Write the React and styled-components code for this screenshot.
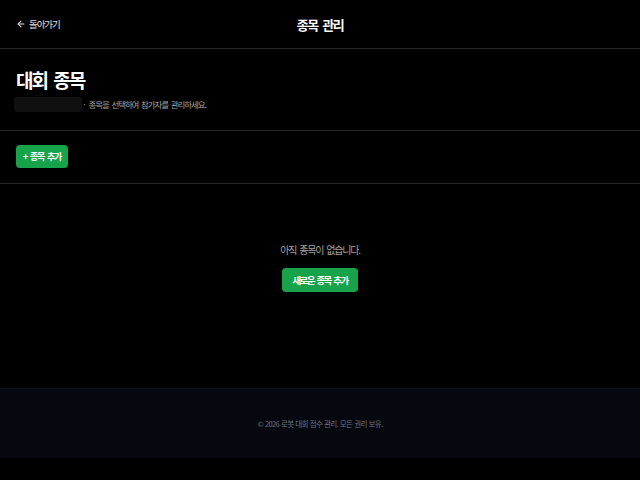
import React from 'react';
import styled, { createGlobalStyle } from 'styled-components';
import { ArrowLeft } from 'lucide-react';

const GlobalStyle = createGlobalStyle`
  html, body {
    margin: 0;
    padding: 0;
    background: #000;
  }
  body {
    font-family: "Noto Sans CJK KR", "Noto Sans", sans-serif;
    color: #fff;
  }
`;

const Page = styled.div`
  width: 640px;
  min-height: 480px;
  display: flex;
  flex-direction: column;
  background: #000;
`;

const Header = styled.header`
  height: 48px;
  display: grid;
  grid-template-columns: 1fr auto 1fr;
  align-items: center;
  padding: 0 16px;
  border-bottom: 1px solid #262626;
`;

const BackLink = styled.a`
  display: flex;
  align-items: center;
  gap: 3px;
  font-size: 9.5px;
  letter-spacing: -1.1px;
  color: #e5e5e5;
  text-decoration: none;
`;

const HeaderTitle = styled.h1`
  margin: 0;
  font-size: 13px;
  letter-spacing: -1.5px;
  word-spacing: 3px;
  font-weight: 700;
`;

const Intro = styled.section`
  padding: 16px 16px 18px;
  border-bottom: 1px solid #262626;
`;

const Title = styled.h2`
  margin: 0;
  font-size: 19px;
  line-height: 30px;
  letter-spacing: -2px;
  word-spacing: 4px;
  font-weight: 700;
`;

const Description = styled.p`
  margin: 2px 0 0;
  display: flex;
  align-items: center;
  font-size: 8.5px;
  line-height: 15px;
  letter-spacing: -1.1px;
  word-spacing: 2px;
  color: #a3a3a3;
`;

const Skeleton = styled.span`
  width: 68px;
  height: 15px;
  margin-left: -2px;
  border-radius: 3px;
  background: #101010;
`;

const Toolbar = styled.div`
  display: flex;
  padding: 14px 16px 15px;
  border-bottom: 1px solid #262626;
`;

const GreenButton = styled.button`
  border: none;
  border-radius: 4px;
  background: #16a34a;
  color: #fff;
  font-family: inherit;
  font-weight: 700;
  font-size: ${(p) => p.$size || 9}px;
  letter-spacing: ${(p) => p.$spacing || -1.2}px;
  word-spacing: 2px;
  height: ${(p) => p.$height || 23}px;
  padding: 0 ${(p) => p.$pad || 7}px;
  cursor: pointer;
`;

const Empty = styled.div`
  height: 204px;
  box-sizing: border-box;
  padding-top: 58px;
  display: flex;
  flex-direction: column;
  align-items: center;
  gap: 11px;
`;

const EmptyText = styled.p`
  margin: 0;
  font-size: 10px;
  line-height: 15px;
  letter-spacing: -1.2px;
  word-spacing: 2px;
  color: #a3a3a3;
`;

const Footer = styled.footer`
  height: 70px;
  box-sizing: border-box;
  display: flex;
  align-items: center;
  justify-content: center;
  background: #05080f;
  border-top: 1px solid #0d121c;
  font-size: 7.5px;
  letter-spacing: -0.7px;
  word-spacing: 1px;
  color: #6b7280;
`;

export default function App() {
  return (
    <Page>
      <GlobalStyle />
      <Header>
        <BackLink href="#">
          <ArrowLeft size={10} strokeWidth={2.5} />
          돌아가기
        </BackLink>
        <HeaderTitle>종목 관리</HeaderTitle>
        <span />
      </Header>
      <Intro>
        <Title>대회 종목</Title>
        <Description>
          <Skeleton />· 종목을 선택하여 참가자를 관리하세요.
        </Description>
      </Intro>
      <Toolbar>
        <GreenButton>+ 종목 추가</GreenButton>
      </Toolbar>
      <Empty>
        <EmptyText>아직 종목이 없습니다.</EmptyText>
        <GreenButton $size={9.5} $spacing={-1.6} $height={24} $pad={10.5}>새로운 종목 추가</GreenButton>
      </Empty>
      <Footer>© 2026 로봇 대회 점수 관리. 모든 권리 보유.</Footer>
    </Page>
  );
}
